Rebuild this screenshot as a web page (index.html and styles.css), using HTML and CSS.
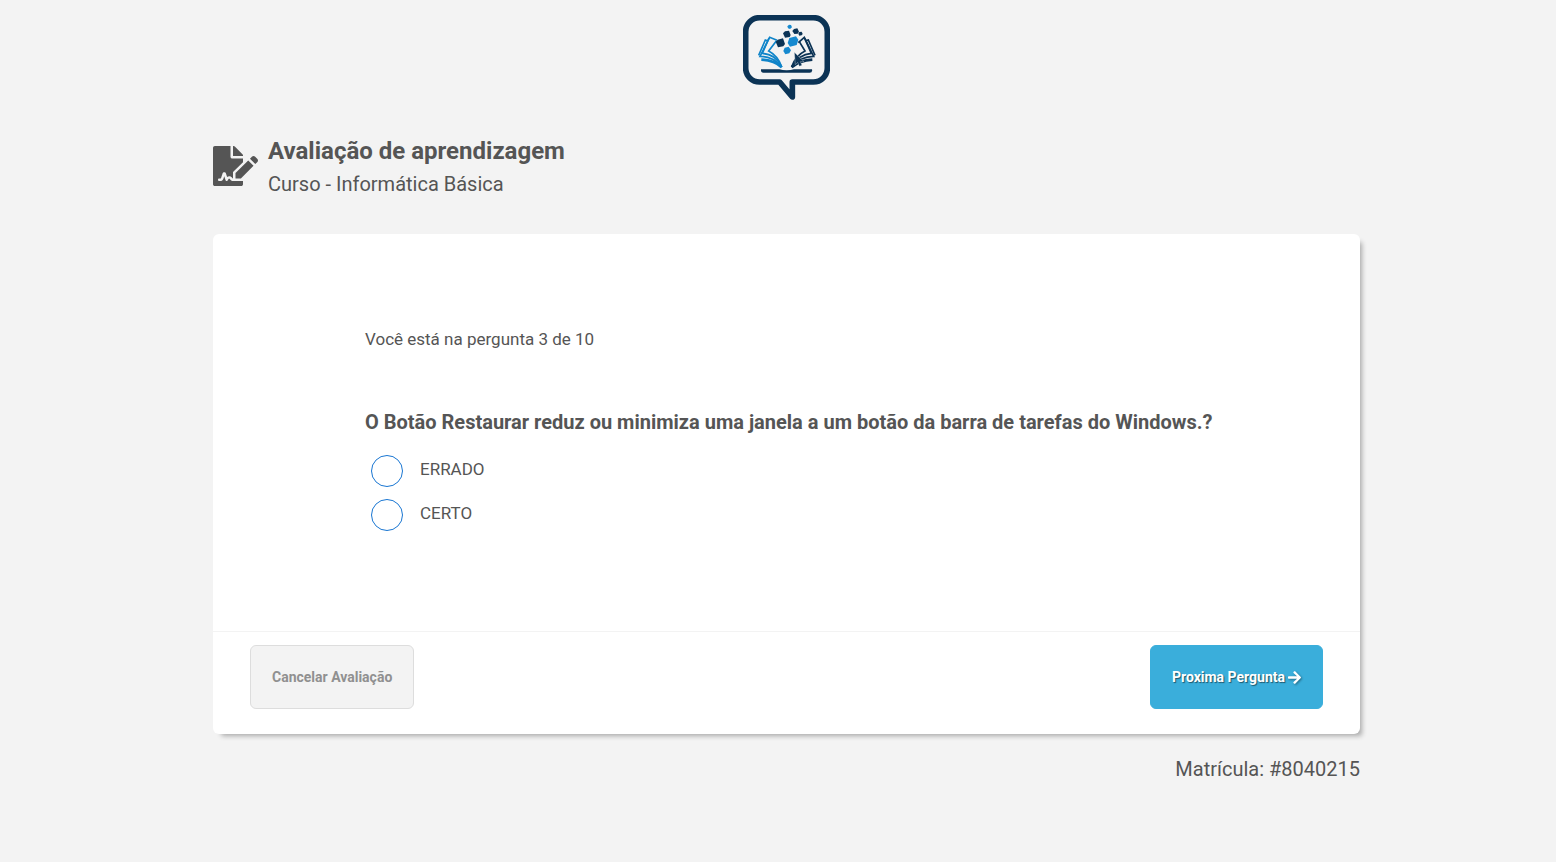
FILE: index.html
```html
<!DOCTYPE html>
<html lang="pt-BR">
<head>
<meta charset="utf-8">
<meta name="viewport" content="width=device-width, initial-scale=1">
<title>Avaliação de aprendizagem</title>
<link rel="stylesheet" href="styles.css">
</head>
<body>
<div class="page">
  <div class="brand">
    <svg class="brand-logo" viewBox="21 21 261 255" role="img" aria-label="Logotipo">
      <path d="M71 29H232A42 42 0 0 1 274 71V180A42 42 0 0 1 232 222H169V267L131 222H71A42 42 0 0 1 29 180V71A42 42 0 0 1 71 29Z" fill="none" stroke="#0b3355" stroke-width="17" stroke-linejoin="round"/>
      <g fill="none" stroke="#0f84c9" stroke-width="5">
        <path d="M123 97L101 88L72 145Q112 145 137 177"/>
        <path d="M94 98L88 96L68 142M99 90L79 136Q120 139 137 177"/>
        <path d="M121 99L98 129Q125 143 137 176"/>
        <path d="M76 155Q116 157 137 178" stroke-width="8"/>
      </g>
      <g fill="none" stroke="#0b3355" stroke-width="5">
        <path d="M187 104L205 88L233 145Q193 145 167 177"/>
        <path d="M210 98L217 96L237 142M206 91L226 136Q188 139 167 177"/>
        <path d="M190 101L207 129Q179 143 167 176"/>
        <path d="M229 155Q190 157 167 178" stroke-width="8"/>
      </g>
      <path d="M75 184H228Q230 194 221 194H82Q74 194 75 184Z" fill="#0b3355"/>
      <path d="M128 182Q152 192 176 182Z" fill="#f3f3f3"/>
      <g fill="#0b3355">
        <path d="M125 95L141 91L147 108L142 115L126 118L119 101Z"/>
        <path d="M147 70L159 68L164 81L161 87L147 89L141 76Z"/>
        <path d="M174 63L184 61L189 71L185 77L175 78L169 69Z"/>
        <path d="M190 72L197 71L200 78L197 82L190 83L187 77Z"/>
        <path d="M175 133L204 161L193 161L198 172L190 175L185 163L178 170Z" stroke="#f3f3f3" stroke-width="1"/>
      </g>
      <g fill="#1689cf">
        <path d="M160 90L180 85L187 95L182 111L162 116L155 105Z"/>
        <path d="M146 119L158 116L165 127L160 136L148 139L142 129Z"/>
        <path d="M159 50L165 51L168 58L162 63L156 61L154 55Z"/>
      </g>
    </svg>
  </div>

  <header class="heading">
    <svg class="heading-icon" viewBox="0 0 576 512" fill="currentColor" aria-hidden="true"><path d="M218.17 424.14c-2.95-5.92-8.09-6.52-10.17-6.52s-7.22.59-10.02 6.19l-7.67 15.34c-6.37 12.78-25.03 11.37-29.48-2.09L144 386.59l-10.61 31.88c-5.89 17.66-22.38 29.53-41 29.53H80c-8.84 0-16-7.16-16-16s7.16-16 16-16h12.39c4.83 0 9.11-3.08 10.64-7.66l18.19-54.64c3.3-9.81 12.44-16.41 22.78-16.41s19.48 6.59 22.77 16.41l13.88 41.64c19.75-16.19 54.06-9.7 66 14.16 1.89 3.78 5.49 5.95 9.36 6.26v-82.12l128-127.09V160H248c-13.2 0-24-10.8-24-24V0H24C10.7 0 0 10.7 0 24v464c0 13.3 10.7 24 24 24h336c13.3 0 24-10.7 24-24v-40l-128-.11c-16.12-.31-30.58-9.28-37.83-23.75zM384 121.9c0-6.3-2.5-12.4-7-16.9L279.1 7c-4.5-4.5-10.6-7-17-7H256v128h128v-6.1zm-96 225.06V416h68.99l161.68-162.78-67.88-67.88L288 346.96zm280.54-179.63l-31.87-31.87c-9.94-9.94-26.07-9.94-36.01 0l-27.25 27.25 67.88 67.88 27.25-27.25c9.95-9.94 9.95-26.07 0-36.01z"/></svg>
    <div>
      <h1 class="heading-title">Avaliação de aprendizagem</h1>
      <p class="heading-course">Curso - Informática Básica</p>
    </div>
  </header>

  <form class="card">
    <div class="card-body">
      <p class="progress">Você está na pergunta 3 de 10</p>
      <fieldset class="question">
        <legend class="question-text">O Botão Restaurar reduz ou minimiza uma janela a um botão da barra de tarefas do Windows.?</legend>
        <div class="options">
          <label class="option" for="answer-wrong"><input class="option-radio" type="radio" name="answer" id="answer-wrong"><span class="option-text">ERRADO</span></label>
          <label class="option" for="answer-right"><input class="option-radio" type="radio" name="answer" id="answer-right"><span class="option-text">CERTO</span></label>
        </div>
      </fieldset>
    </div>
    <div class="card-footer">
      <button class="button button-cancel" type="button">Cancelar Avaliação</button>
      <button class="button button-next" type="button">Proxima Pergunta <svg class="button-arrow" viewBox="0 0 448 512" fill="currentColor" aria-hidden="true"><path d="M190.5 66.9l22.2-22.2c9.4-9.4 24.6-9.4 33.9 0L441 239c9.4 9.4 9.4 24.6 0 33.9L246.6 467.3c-9.4 9.4-24.6 9.4-33.9 0l-22.2-22.2c-9.5-9.5-9.3-25 .4-34.3L311.4 296H24c-13.3 0-24-10.7-24-24v-32c0-13.3 10.7-24 24-24h287.4L190.9 101.2c-9.8-9.3-10-24.8-.4-34.3z"/></svg></button>
    </div>
  </form>

  <p class="enrollment">Matrícula: #8040215</p>
</div>
</body>
</html>
```
FILE: styles.css
```css
* {
  box-sizing: border-box;
}

body {
  margin: 0;
  padding: 15px 0 15px 17px;
  background: #f3f3f3;
  color: #555;
  font-family: Roboto, "Liberation Sans", sans-serif;
}

h1,
p {
  margin: 0;
}

.page {
  max-width: 1147px;
  margin: 0 auto;
}

.brand {
  display: flex;
  justify-content: center;
}

.brand-logo {
  width: 87px;
  height: 85px;
}

.heading {
  display: flex;
  align-items: center;
  gap: 10px;
  margin: 33px 0 35px;
}

.heading-icon {
  width: 45px;
  height: 40px;
}

.heading-title {
  font-size: 24px;
  line-height: 36px;
}

.heading-course {
  font-size: 20px;
  line-height: 30px;
}

.card {
  background: #fff;
  border-radius: 6px;
  box-shadow: 5px 5px 5px -3px rgba(0, 0, 0, 0.3);
}

.card-body {
  padding: 92px 37px 94px 152px;
}

.progress {
  margin-bottom: 55px;
  font-size: 17px;
  line-height: 26px;
}

.question {
  margin: 0;
  padding: 0;
  border: 0;
}

.question-text {
  padding: 0;
  font-size: 20px;
  font-weight: 700;
  line-height: 30px;
}

.options {
  display: flex;
  flex-direction: column;
  gap: 12px;
  padding: 18px 6px 6px;
}

.option {
  display: flex;
  gap: 17px;
}

.option-radio {
  appearance: none;
  width: 32px;
  height: 32px;
  margin: 0;
  border: 1px solid #1976d2;
  border-radius: 50%;
  background: #fff;
}

.option-radio:checked {
  background: #1976d2;
}

.option-text {
  font-size: 17px;
  line-height: 28px;
}

.card-footer {
  display: flex;
  justify-content: space-between;
  padding: 13px 37px 25px;
  border-top: 1px solid #f3f3f3;
}

.button {
  height: 64px;
  padding: 0 21px;
  border: 1px solid #ddd;
  border-radius: 6px;
  font-family: inherit;
  font-size: 14px;
  font-weight: 700;
  cursor: pointer;
}

.button-cancel {
  background: #f3f3f3;
  color: #909090;
}

.button-next {
  display: flex;
  align-items: center;
  gap: 3px;
  border-color: #3aaedb;
  background: #3aaedb;
  color: #fff;
  text-shadow: 1px 1px 1px rgba(0, 0, 0, 0.5);
}

.button-arrow {
  width: 13px;
  height: 15px;
  filter: drop-shadow(1px 1px 1px rgba(0, 0, 0, 0.4));
}

.enrollment {
  margin-top: 20px;
  font-size: 20px;
  line-height: 30px;
  text-align: right;
}
```
